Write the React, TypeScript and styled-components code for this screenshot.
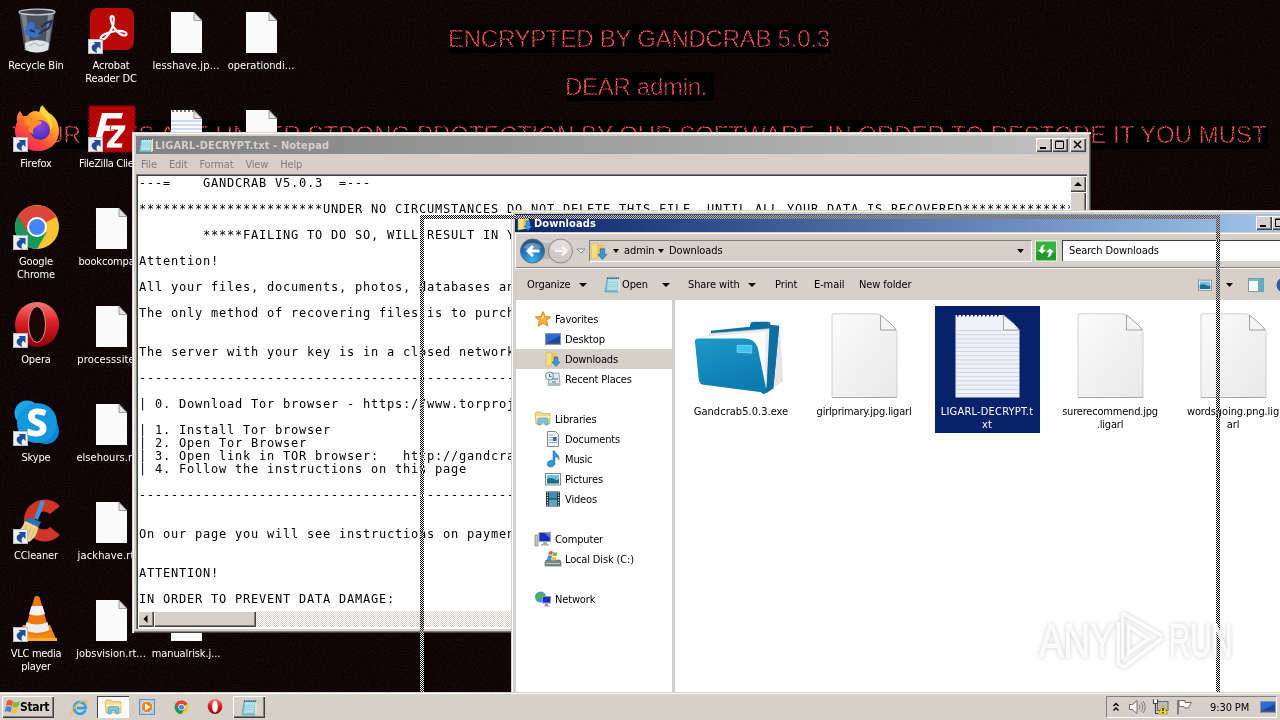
import React from "react";
import styled, { createGlobalStyle, css } from "styled-components";

const UI = `"DejaVu Sans Condensed", "DejaVu Sans", sans-serif`;
const FACE = "#d6d0c8";
const DITHER = "repeating-conic-gradient(#ffffff 0 25%, #d6d0c8 0 50%) 0 0 / 2px 2px";
const XOR = "repeating-conic-gradient(#ffffff 0 25%, #000000 0 50%) 0 0 / 2px 2px";

const Global = createGlobalStyle`
  * { box-sizing: border-box; }
  body { margin: 0; background: #110606; overflow: hidden; }
  svg { display: block; flex: none; overflow: visible; }
`;

const raised = css`
  background: ${FACE};
  box-shadow: inset 1px 1px 0 #fff, inset -1px -1px 0 #404040, inset -2px -2px 0 #808080;
`;

const Desktop = styled.div`
  position: relative;
  width: 1280px;
  height: 720px;
  overflow: hidden;
  background: #110606;
  font: 11px/13px ${UI};
  letter-spacing: -0.1px;
  color: #000;
  cursor: default;
  white-space: nowrap;
`;

const Grain = styled.svg`
  position: absolute;
  inset: 0;
`;

/* ---------- wallpaper ---------- */
const Wallpaper = styled.div`
  position: absolute;
  inset: 0;
  display: flex;
  flex-direction: column;
  align-items: center;
  padding-top: 24px;
  gap: 19px;
`;
const Notice = styled.div<{ $w: number; $ls: number }>`
  width: ${(p) => p.$w}px;
  height: 29px;
  background: #000;
  color: #f4545a;
  font: 300 24px/29px "Liberation Sans", sans-serif;
  letter-spacing: ${(p) => p.$ls}px;
  span {
    display: block;
    margin-left: -1px;
    -webkit-text-stroke: 0.4px #000;
    filter: url(#speckle);
  }
`;

/* ---------- desktop icons ---------- */
const IconGrid = styled.div`
  position: absolute;
  inset: 8px auto auto 0;
  display: grid;
  grid-template-columns: repeat(4, 74px);
  grid-template-rows: repeat(7, 98px);
  column-gap: 1px;
`;
const Shortcut = styled.div<{ $c: number; $r: number }>`
  grid-column: ${(p) => p.$c};
  grid-row: ${(p) => p.$r};
  display: flex;
  flex-direction: column;
  align-items: center;
  color: #fff;
`;
const ShortcutLabel = styled.div<{ $ls?: number }>`
  margin: 3px 2px 0 0;
  text-align: center;
  white-space: pre;
  letter-spacing: ${(p) => p.$ls ?? -0.15}px;
`;

/* ---------- windows ---------- */
const Win = styled.div<{ $x: number; $y: number; $w: number; $h: number }>`
  position: absolute;
  left: ${(p) => p.$x}px;
  top: ${(p) => p.$y}px;
  width: ${(p) => p.$w}px;
  height: ${(p) => p.$h}px;
  padding: 4px;
  display: flex;
  flex-direction: column;
  background: ${FACE};
  box-shadow: inset 1px 1px 0 ${FACE}, inset 2px 2px 0 #fff, inset -1px -1px 0 #404040, inset -2px -2px 0 #808080;
`;
const Title = styled.div<{ $active?: boolean }>`
  height: 18px;
  flex: none;
  display: flex;
  align-items: center;
  padding: 0 1px 0 2px;
  gap: 1px;
  font-weight: 700;
  color: ${(p) => (p.$active ? "#fff" : "#d6d0c8")};
  background: ${(p) => (p.$active ? "linear-gradient(90deg,#0a246a,#a6caf0)" : "linear-gradient(90deg,#808080,#c0c0c0)")};
`;
const TitleText = styled.div<{ $ls?: number }>`
  flex: 1;
  letter-spacing: ${(p) => p.$ls ?? 0}px;
`;
const CapButton = styled.div<{ $gap?: boolean }>`
  ${raised}
  width: 16px;
  height: 14px;
  flex: none;
  margin-left: ${(p) => (p.$gap ? 1 : -1)}px;
`;
const Menu = styled.div`
  display: flex;
  align-items: center;
  height: 20px;
  flex: none;
  padding: 1px 0 0 5px;
  gap: 12px;
  color: #808080;
  letter-spacing: -0.15px;
`;
const Client = styled.div`
  flex: 1;
  display: grid;
  grid-template: 1fr 16px / 1fr 16px;
  padding: 2px 1px 2px 2px;
  background: #fff;
  overflow: hidden;
  box-shadow: inset 1px 1px 0 #808080, inset 2px 2px 0 #404040, inset -1px -1px 0 #fff;
`;
const Paper = styled.pre`
  margin: 0;
  padding: 1px 0 0 1px;
  overflow: hidden;
  min-width: 0;
  font: 12px/13px "DejaVu Sans Mono", monospace;
  letter-spacing: 0.776px;
`;
const VScroll = styled.div`
  background: ${DITHER};
  display: flex;
  flex-direction: column;
`;
const HScroll = styled.div`
  background: ${DITHER};
  display: flex;
`;
const ScrollPart = styled.div<{ $w: number; $h: number }>`
  ${raised}
  width: ${(p) => p.$w}px;
  height: ${(p) => p.$h}px;
  flex: none;
`;
const Corner = styled.div`
  background: ${FACE};
`;

/* ---------- explorer ---------- */
const NavBar = styled.div`
  height: 35px;
  flex: none;
  margin-top: 1px;
  padding: 0 0 0 4px;
  display: flex;
  align-items: center;
  overflow: hidden;
  border-top: 1px solid #fff;
  border-bottom: 1px solid #808080;
  border-left: 1px solid #fff;
`;
const Address = styled.div`
  width: 443px;
  height: 22px;
  flex: none;
  margin: 0 3px 0 4px;
  display: flex;
  align-items: center;
  border: 1px solid;
  border-color: #808080 #fff #fff #808080;
`;
const Crumb = styled.span<{ $w: number; $ls?: number }>`
  width: ${(p) => p.$w}px;
  flex: none;
  letter-spacing: ${(p) => p.$ls ?? -0.1}px;
`;
const Spacer = styled.div`
  flex: 1;
`;
const Search = styled.div`
  width: 240px;
  height: 21px;
  flex: none;
  margin-left: 5px;
  padding-left: 7px;
  line-height: 21px;
  background: #fff;
  box-shadow: inset 1px 1px 0 #404040;
`;
const Tools = styled.div`
  height: 32px;
  flex: none;
  display: flex;
  align-items: center;
  padding-left: 12px;
  border-top: 1px solid #fff;
`;
const Tool = styled.div<{ $w: number }>`
  width: ${(p) => p.$w}px;
  flex: none;
  display: flex;
  align-items: center;
  gap: 1px;
`;
const Body = styled.div`
  flex: 1;
  display: flex;
  background: #fff;
  overflow: hidden;
  margin-left: 1px;
`;
const Tree = styled.div`
  width: 156px;
  flex: none;
  padding-top: 9px;
  display: flex;
  flex-direction: column;
  gap: 20px;
`;
const TreeRow = styled.div<{ $child?: boolean; $on?: boolean }>`
  height: 20px;
  padding-left: ${(p) => (p.$child ? 29 : 19)}px;
  display: flex;
  align-items: center;
  gap: 4px;
  letter-spacing: -0.15px;
  background: ${(p) => (p.$on ? FACE : "transparent")};
`;
const Split = styled.div`
  width: 3px;
  flex: none;
  background: #d0ccc6;
`;
const Files = styled.div`
  padding: 6px 0 0 14px;
  display: flex;
  align-items: flex-start;
  gap: 18px;
`;
const File = styled.div<{ $on?: boolean }>`
  width: 105px;
  height: 127px;
  flex: none;
  padding: 7px 1px 0 0;
  display: flex;
  flex-direction: column;
  align-items: center;
  background: ${(p) => (p.$on ? "#08216b" : "transparent")};
  color: ${(p) => (p.$on ? "#fff" : "#000")};
`;
const FileLabel = styled.div<{ $ls?: number }>`
  margin-top: 5px;
  text-align: center;
  white-space: pre;
  letter-spacing: ${(p) => p.$ls ?? -0.1}px;
`;

/* ---------- drag outline ---------- */
const DragTop = styled.div`
  position: absolute;
  left: 424px;
  top: 215px;
  width: 792px;
  height: 4px;
  background: ${XOR};
  mix-blend-mode: difference;
`;
const DragSide = styled.div<{ $x: number }>`
  position: absolute;
  left: ${(p) => p.$x}px;
  top: 215px;
  width: 4px;
  height: 480px;
  background: ${XOR};
  mix-blend-mode: difference;
`;

/* ---------- watermark ---------- */
const Mark = styled.div`
  position: absolute;
  left: 1039px;
  top: 608px;
  height: 64px;
  display: flex;
  align-items: center;
  color: rgba(255, 255, 255, 0.85);
  font: 49px/64px "Liberation Sans Narrow", "Liberation Sans", sans-serif;
  -webkit-text-stroke: 1px rgba(255, 255, 255, 0.85);
  filter: drop-shadow(0 0 2px rgba(0, 0, 0, 0.22));
`;
const MarkWord = styled.span<{ $w: number; $sx: number }>`
  width: ${(p) => p.$w}px;
  transform: scaleX(${(p) => p.$sx});
  transform-origin: 0 50%;
`;

/* ---------- taskbar ---------- */
const Taskbar = styled.div`
  position: absolute;
  left: 0;
  right: 0;
  bottom: 0;
  height: 28px;
  padding: 4px 3px 2px 2px;
  display: flex;
  background: ${FACE};
  box-shadow: inset 0 1px 0 #d6d0c8, inset 0 2px 0 #fff;
`;
const Start = styled.div`
  ${raised}
  width: 52px;
  height: 22px;
  display: flex;
  align-items: center;
  padding-left: 2px;
  margin-right: 9px;
  font: 700 12px/22px ${UI};
  letter-spacing: -0.35px;
`;
const TaskButton = styled.div<{ $state?: "pressed" | "raised" }>`
  width: 32px;
  height: 22px;
  margin-right: 2px;
  display: flex;
  align-items: center;
  justify-content: center;
  ${(p) => p.$state === "raised" && raised}
  ${(p) =>
    p.$state === "pressed" &&
    css`
      background: #fbfaf8;
      box-shadow: inset 1px 1px 0 #404040, inset -1px -1px 0 #fff;
    `}
`;
const Tray = styled.div`
  width: 171px;
  height: 22px;
  display: flex;
  align-items: center;
  border: 1px solid;
  border-color: #808080 #fff #fff #808080;
  padding: 0 1px 0 6px;
`;
const TraySlot = styled.div<{ $w: number }>`
  width: ${(p) => p.$w}px;
  flex: none;
  letter-spacing: -0.1px;
`;

/* ---------- drawings ---------- */
const Svg = ({ s = 48, vb = 48, children }: { s?: number; vb?: number; children: React.ReactNode }) => (
  <svg width={s} height={s} viewBox={`0 0 ${vb} ${vb}`}>{children}</svg>
);
const Link = () => (
  <g>
    <rect x="0.5" y="31.5" width="14" height="14" fill="#f0efec" stroke="#b9bfc8" />
    <path d="M5.500 34h7v7l-2.300-2.300c-1.800 1.600-2.200 3.300-0.900 6-3.400-0.400-6-2.800-5.600-5.700 0.300-1.700 1.700-2.800 3.600-3z" fill="#1f4f9c" />
  </g>
);
const Caret = ({ open, size = 7 }: { open?: boolean; size?: number }) => (
  <svg width={size} height="4" viewBox="0 0 7 4" preserveAspectRatio="none">
    <path d="M0 0h7L3.500 4z" fill={open ? "#fff" : "#000"} stroke={open ? "#777" : "none"} strokeWidth="0.8" />
  </svg>
);
const DocArt = ({ notes }: { notes?: boolean }) => (
  <Svg>
    <path d="M8 4h23l8 9v32H8z" fill="#fafafa" />
    {notes && <path d="M8 15h31M8 19h31M8 23h31M8 27h31M8 31h31" stroke="#a9bcdc" />}
    {notes && <path d="M9 5h22" stroke="#777" strokeWidth="2" strokeDasharray="2 2" />}
    <path d="M31 4.500v8h8z" fill="#e4e4e4" stroke="#888" strokeWidth="0.8" />
  </Svg>
);
const Recycle = () => (
  <Svg>
    <path d="M6 3L11.500 42Q24 47 36 42L42 3z" fill="#4c535d" />
    <path d="M8 6l6 35h4L13 6z" fill="#8f969f" opacity="0.7" />
    <path d="M35 6l-3 36 3-1L40 6z" fill="#9aa1aa" opacity="0.7" />
    <path d="M13 18c4-6 8-5 9-1l-1 4c4-1 8 2 7 6l-6 3-9-3c-2-3-1-6 0-9z" fill="#3a70c4" />
    <path d="M17 22l5 2M28 19l5-4 6-2-3 7-6 3-4 3" stroke="#1c3460" strokeWidth="2" fill="none" />
    <path d="M12 35q12-6 24 0l-1 7Q24 47 12.500 42z" fill="#dfe2e6" />
    <path d="M16 38l5-3 6 3 5-2" stroke="#a9afb6" fill="none" />
    <ellipse cx="24" cy="4" rx="18" ry="2.800" fill="#3b4047" stroke="#c6cbd1" strokeWidth="1.300" />
  </Svg>
);
const Acrobat = () => (
  <Svg>
    <rect x="2" y="0" width="44" height="42" rx="8" fill="#b90b06" />
    <path d="M13 31c-2-3 6-7 15-8 8-1 12 2 10 4-3 2-10-3-13-9-3-6-3-10-1-10s3 5 0 12c-3 7-8 13-11 11z" fill="none" stroke="#fff" strokeWidth="2.200" />
    <Link />
  </Svg>
);
const Firefox = () => (
  <Svg>
    <defs>
      <linearGradient id="fx" x1="0.9" y1="0" x2="0.2" y2="1">
        <stop offset="0" stopColor="#fff04a" /><stop offset="0.35" stopColor="#ffa726" /><stop offset="0.7" stopColor="#ff4a3a" /><stop offset="1" stopColor="#e2206a" />
      </linearGradient>
      <radialGradient id="fp" cx="0.5" cy="0.3" r="0.7"><stop offset="0" stopColor="#8a45e8" /><stop offset="1" stopColor="#4a2bb8" /></radialGradient>
    </defs>
    <path d="M4 16C3 11 5 7 7 5l3 5 4 0C18 5 22 4 26 6l3-7c3 3 5 6 7 8 6 3 10 10 10 18C46 37 37 45 25 45S2 37 2 25c0-4 1-7 2-9z" fill="url(#fx)" />
    <circle cx="27" cy="24" r="10" fill="url(#fp)" />
    <path d="M11 14c4-3 8-2 11 0 4 0 7 1 7 3-2 2-5 2-6 4-3 1-4 4-2 7-5-1-6-5-5-8-2-1-5-2-5-6z" fill="#ff8a2a" />
    <path d="M28 0c-2 4 0 7 3 10 4 4 7 8 6 15 4-6 2-13-1-17-3-3-6-4-8-8z" fill="#ffd93b" />
    <Link />
  </Svg>
);
const FileZilla = () => (
  <Svg>
    <rect x="1" y="0" width="46" height="46" fill="#b40206" stroke="#7a0003" strokeWidth="2" strokeDasharray="2 2" />
    <path d="M14 7h21l-1.500 5.500H19l-1.500 7h10L26 25H16l-4 13H6z" fill="#fff" />
    <path d="M23 19h15l-1 5-10.500 13H35l-1 5H18l1-5 11-13h-8z" fill="#fff" stroke="#b40206" strokeWidth="0.8" />
    <Link />
  </Svg>
);
const ChromeShape = () => (
  <g>
    <circle cx="24" cy="23" r="22" fill="#fbc432" />
    <path d="M24 23L5 12A22 22 0 0 0 24 45l9.500-16.500z" fill="#15995a" />
    <path d="M24 23L4.900 12A22 22 0 0 1 43.100 13H24z" fill="#de453a" />
    <path d="M24 13h19.100L24 23 14 28 4.900 12z" fill="#de453a" />
    <circle cx="24" cy="23" r="10" fill="#fff" />
    <circle cx="24" cy="23" r="8" fill="#4586f4" />
  </g>
);
const OperaShape = ({ hole }: { hole: string }) => (
  <g>
    <defs><linearGradient id="op" x1="0" y1="0" x2="0" y2="1"><stop offset="0" stopColor="#f47a78" /><stop offset="0.45" stopColor="#dd1f26" /><stop offset="1" stopColor="#8d0009" /></linearGradient></defs>
    <ellipse cx="24" cy="22.500" rx="22" ry="22.500" fill="url(#op)" />
    <ellipse cx="24" cy="22.500" rx="8.500" ry="18" fill={hole} stroke="#ef8d8a" strokeWidth="1" />
  </g>
);
const SText = styled.text`
  font: 700 38px "Open Sans", sans-serif;
  letter-spacing: 0;
`;
const Skype = () => (
  <Svg>
    <circle cx="14" cy="13" r="12.500" fill="#1aa7e8" />
    <circle cx="33" cy="31" r="13" fill="#0d84d6" />
    <circle cx="24" cy="23" r="20" fill="#1597e0" />
    <SText x="24" y="36" textAnchor="middle" fill="#fff" stroke="#fff" strokeWidth="1">S</SText>
    <Link />
  </Svg>
);
const CCleaner = () => (
  <Svg>
    <path d="M47 8A21 21 0 1 0 47 37L37 29a9 9 0 1 1 0-13z" fill="#cf3527" />
    <path d="M28 2l4 2-7 18-4-2z" fill="#3f93d8" />
    <path d="M16 19l12 5-3 6-13-6z" fill="#2573ba" />
    <path d="M12 23l13 6c0 6-3 11-9 15L2 34c6-2 8-6 10-11z" fill="#f2d48f" />
    <path d="M14 27l-5 10M18 29l-4 12M22 30l-5 12" stroke="#d9b266" />
    <Link />
  </Svg>
);
const Vlc = () => (
  <Svg>
    <path d="M10 29h27l7 16H3z" fill="#f08a12" />
    <path d="M3 42h41v3H3z" fill="#ffa92f" />
    <path d="M21.500 1q2.500-2 5 0l10 35q-12.500 7-25 0z" fill="#ef7a10" />
    <path d="M18.500 10h11l2.500 8q-8 3-16 0z" fill="#f4f4f4" />
    <path d="M13.500 26q10.500 5 21 0l2 8q-12.500 6-25 0z" fill="#ededed" />
    <Link />
  </Svg>
);
const NotepadIcon = ({ s = 16 }: { s?: number }) => (
  <Svg s={s} vb={16}>
    <path d="M3 2l12 0-1 13H1z" fill="#7cc3d4" stroke="#5f8f9c" strokeWidth="0.6" />
    <path d="M4 3h9l-1 10H3z" fill="#b4e6ee" />
    <path d="M13.500 2h1.500v12l-2 1z" fill="#eee6c8" />
    <path d="M3 2h11" stroke="#3b5560" strokeWidth="1.500" strokeDasharray="1 1" />
    <path d="M4 6h8M4 8h8M4 10h7" stroke="#86c5d6" strokeWidth="0.7" />
  </Svg>
);
const DownIcon = ({ s = 16 }: { s?: number }) => (
  <Svg s={s} vb={16}>
    <path d="M1 2l6-1v13l-6 1z" fill="#f5df85" stroke="#c9a94e" strokeWidth="0.5" />
    <path d="M6 2h6v12H6z" fill="#e9c75b" />
    <path d="M9 6h4v5h2l-4 4.500L7 11h2z" fill="#3c96dd" stroke="#1d64a8" strokeWidth="0.6" />
  </Svg>
);
const LibIcon = ({ s = 16 }: { s?: number }) => (
  <Svg s={s} vb={16}>
    <path d="M0 3l1-2h5l1 1.500h8V13H1z" fill="#f1dc86" stroke="#c3a54c" strokeWidth="0.6" />
    <path d="M1 6h14" stroke="#fff6c9" strokeWidth="1.500" />
    <path d="M3 9q0-2 2-2h6q2 0 2 2v5h-3v-3H6v3H3z" fill="#7fc4e6" stroke="#4a93bd" strokeWidth="0.6" />
  </Svg>
);
const Star = () => (
  <Svg s={16} vb={16}><path d="M8 0.500l2.300 5 5.400 0.500-4.100 3.600 1.300 5.600L8 12.300 3.100 15.200l1.300-5.600L0.300 6l5.400-0.500z" fill="#f9ad2c" stroke="#d2761a" strokeWidth="0.8" /><path d="M8 3l1.400 3.500L6 9z" fill="#ffe58a" /></Svg>
);
const Screen = ({ s = 16 }: { s?: number }) => (
  <Svg s={s} vb={16}><rect x="0.500" y="2.500" width="15" height="11" fill="#2f6ad0" stroke="#8b97ad" /><path d="M1 12l14-7v7z" fill="#1a45a4" /><rect x="1" y="11.500" width="14" height="1.500" fill="#4a586e" /></Svg>
);
const Recent = () => (
  <Svg s={16} vb={16}><path d="M5 2h9l1 12H3z" fill="#dfe9ef" stroke="#7d919d" strokeWidth="0.8" /><circle cx="4.500" cy="5" r="4" fill="#d7eaf5" stroke="#7a93a3" /><path d="M4.500 3v2.500h2M7 8h6M7 11h4" stroke="#56707f" fill="none" /><path d="M3 12h11v3H3z" fill="#aebcc5" /></Svg>
);
const Docs = () => (
  <Svg s={16} vb={16}><path d="M2.500 0.500h8l3 3v12h-11z" fill="#f7fafd" stroke="#7c8894" /><path d="M4 4h4M4 6.500h8M4 9h8M4 11.500h8" stroke="#93a4b8" /><rect x="8" y="6" width="3.500" height="4" fill="#3b68a3" /></Svg>
);
const Music = () => (
  <Svg s={16} vb={16}><path d="M8 0h2c0 3 5 3 4 9-1-3-2-3-4-3v6a4 3.300 -20 1 1-2-2.500z" fill="#2f98e0" stroke="#1766ab" strokeWidth="0.5" /></Svg>
);
const Pics = ({ s = 16 }: { s?: number }) => (
  <Svg s={s} vb={16}><rect x="0.500" y="2.500" width="15" height="11.500" fill="#fff" stroke="#7b8791" /><rect x="2" y="4" width="12" height="8.500" fill="#6fc0e6" /><path d="M2 8q4-2 7 0t5 0v4.500H2z" fill="#1e6f86" /></Svg>
);
const Vids = () => (
  <Svg s={16} vb={16}><rect x="1" y="0.500" width="14" height="15" fill="#22303a" /><path d="M2.500 1v14M13.500 1v14" stroke="#dde6ea" strokeWidth="1.300" strokeDasharray="1.300 1.200" /><rect x="4" y="1" width="8" height="6.500" fill="#3f8fb8" /><rect x="4" y="8.500" width="8" height="6.500" fill="#56a6cf" /></Svg>
);
const Comp = () => (
  <Svg s={16} vb={16}><path d="M0 4h3v11H0z" fill="#c8c8c0" stroke="#77776f" strokeWidth="0.6" /><rect x="4" y="1.500" width="11.500" height="9" fill="#1631b4" stroke="#9aa4bc" /><path d="M9 2h6v5z" fill="#5a7ae6" /><path d="M8 11h4v2h2v1.500H6V13h2z" fill="#a8aeb8" /></Svg>
);
const Disk = () => (
  <Svg s={16} vb={16}><path d="M1 9h14l1 2v4H0v-4z" fill="#7b888f" stroke="#566066" strokeWidth="0.6" /><path d="M1 12.500h14" stroke="#a5dca5" /><path d="M4 1q2-2 4 0l-1 3q-2-1.500-4 0z" fill="#e8542a" /><path d="M8.500 1q2 1.500 4 0l-1 3.500q-2 1-4 0z" fill="#6cb33a" /><path d="M3 5q2-1.500 4 0L6 9H2z" fill="#3e8de0" /><path d="M7.500 5.500q2 1 4 0L10.500 9.500h-4z" fill="#f4c22b" /></Svg>
);
const Net = () => (
  <Svg s={16} vb={16}><circle cx="5.500" cy="6" r="5.500" fill="#3b9fd8" /><path d="M2 2.500q4-2 5 1T4 8 1 8zM7 1l3 2-1 3z" fill="#52b24a" /><rect x="7.500" y="5.500" width="8" height="6.500" fill="#1a2fc0" stroke="#8f9bb8" /><path d="M10 12.500h3v2h1.500v1H9v-1h1z" fill="#8e98a8" /></Svg>
);
const Flag = () => (
  <Svg s={16} vb={16}>
    <path d="M3 2q3-2 6 0.500L8 7.500Q5 5.500 2 7z" fill="#ec5a2b" /><path d="M9.700 2.800q3 1.500 6-0.500l-1.200 5q-3 2-6 0.500z" fill="#79b93c" />
    <path d="M1.800 8q3-1.500 6 0.500L6.500 13.500Q3.500 11.500 0.500 13z" fill="#3d86dc" /><path d="M8.300 8.800q3 1.500 6-0.500l-1.200 5q-3 2-6 0.500z" fill="#f6c32c" />
  </Svg>
);
const IE = () => (
  <Svg s={17} vb={16}>
    <path d="M13.500 10.500A5.500 5.500 0 1 1 13.800 7.500V8.500H5.500" fill="none" stroke="#3aa0e2" strokeWidth="2.600" />
    <path d="M1 14.500C-1 12 5 3 13 1.500c3 0 2 2 1 4" fill="none" stroke="#efc13c" strokeWidth="1.300" />
  </Svg>
);
const Wmp = () => (
  <Svg s={16} vb={16}><rect x="0.500" y="0.500" width="15" height="15" fill="#a9cdee" stroke="#5f94c8" /><circle cx="8" cy="8" r="5.800" fill="#f08418" stroke="#fff" strokeWidth="0.6" /><path d="M6 4.500v7L11.500 8z" fill="#fff" /></Svg>
);
const Speaker = () => (
  <Svg s={16} vb={16}>
    <path d="M0.500 5.500h3L8 1.500v13L3.500 10.500h-3z" fill="#fff" stroke="#6b6b6b" />
    <path d="M10 5.500q2 2.500 0 5M12 3.500q3.500 4.500 0 9M14 2q4.500 6 0 12" fill="none" stroke="#7a7a7a" />
  </Svg>
);
const Wired = () => (
  <Svg s={16} vb={16}>
    <rect x="4.500" y="2.500" width="10.500" height="9" fill="#bcbcbc" stroke="#6a6a6a" />
    <path d="M0.500 0.500v4h4v-4M2.500 4.500V14.500h3" fill="none" stroke="#444" strokeWidth="1.200" />
    <path d="M1 1h3v3H1z" fill="#fff" />
    <path d="M10 6.500L15 15H5z" fill="#ffd42a" stroke="#a88400" strokeWidth="0.6" />
    <path d="M10 9v3M10 13v1.200" stroke="#000" strokeWidth="1.200" />
  </Svg>
);
const ActionFlag = () => (
  <Svg s={16} vb={16}>
    <path d="M1 1v14.500" stroke="#666" strokeWidth="1.500" />
    <path d="M2 1.500h6v2h6.500l-2 3 -1 2.500-3.500 0-1-1.500H2z" fill="#fff" stroke="#6d6d6d" />
  </Svg>
);
const BigDoc = ({ notes }: { notes?: boolean }) => (
  <svg width="67" height="87" viewBox="0 0 67 87">
    <defs><linearGradient id="bd" x1="0" y1="0" x2="1" y2="1"><stop offset="0" stopColor="#fbfbfb" /><stop offset="1" stopColor="#e9e9e9" /></linearGradient></defs>
    <path d={notes ? "M1.500 2h47l17 15v67.500h-64z" : "M2.500 0.800H45q3 0 5 2L64 15q2 2 2 5v64.500H1V2.300q0-1.500 1.500-1.500z"} fill={notes ? "#eef2f8" : "url(#bd)"} stroke={notes ? "none" : "#cfcfcf"} />
    {notes && Array.from({ length: 16 }, (_, i) => <path key={i} d={`M2 ${17.500 + i * 4.200}h63`} stroke="#c9cfda" strokeWidth="0.9" />)}
    {notes && <path d="M3 2h44" stroke="#08216b" strokeWidth="3" strokeDasharray="1.500 2.500" />}
    <path d="M49.500 2v15H65Q63 13.500 59 10z" fill="#f4f4f4" stroke="#a4a4a4" />
    {!notes && <path d="M1 84.500h65" stroke="#a8a8a8" />}
  </svg>
);
const Folder = () => (
  <svg width="96" height="87" viewBox="0 0 96 87">
    <defs><linearGradient id="fo" x1="0" y1="0" x2="0.400" y2="1"><stop offset="0" stopColor="#2098c8" /><stop offset="1" stopColor="#0a7cb0" /></linearGradient></defs>
    <g transform="translate(-1 0) scale(0.98)">
      <path d="M76 80l14-60 3 50z" fill="#bbb" opacity="0.4" />
      <path d="M19 18l40-4 1-4q1-1 3-1l15 0q2 0 2 3l9 1-6 64-10 6-50-42z" fill="#0c6f9f" />
      <path d="M18 21l62-5-4 60-57-6z" fill="#eeeeee" stroke="#c8c8c8" strokeWidth="0.7" />
      <path d="M10 24l66-6-1 55-60-30z" fill="#fafafa" stroke="#ddd" strokeWidth="0.6" />
      <path d="M79 15l10-2-6 63-7 6z" fill="#0c6f9f" />
      <path d="M3 29q0-3 3-3l47 0q11 0 14 9l9 44q0 3-3 2L10 73q-2-1-3-4z" fill="url(#fo)" />
      <path d="M46 33l15 0 0 8-15-1z" fill="#45c3ee" stroke="#7cdcf8" strokeWidth="0.8" />
    </g>
  </svg>
);

const LINES = [
  "---=    GANDCRAB V5.0.3  =---",
  "",
  "*".repeat(23) + "UNDER NO CIRCUMSTANCES DO NOT DELETE THIS FILE, UNTIL ALL YOUR DATA IS RECOVERED" + "*".repeat(23),
  "",
  "        *****FAILING TO DO SO, WILL RESULT IN YOUR SYSTEM CORRUPTION*****",
  "",
  "Attention!",
  "",
  "All your files, documents, photos, databases and other important files",
  "",
  "The only method of recovering files is to purchase an unique private key.",
  "",
  "",
  "The server with your key is in a closed network TOR.",
  "",
  "-".repeat(116),
  "",
  "| 0. Download Tor browser - https://www.torproject.org/",
  "",
  "| 1. Install Tor browser",
  "| 2. Open Tor Browser",
  "| 3. Open link in TOR browser:   http://gandcrab",
  "| 4. Follow the instructions on this page",
  "",
  "-".repeat(116),
  "",
  "",
  "On our page you will see instructions on payment",
  "",
  "",
  "ATTENTION!",
  "",
  "IN ORDER TO PREVENT DATA DAMAGE:",
];

const SHORTCUTS: { c: number; r: number; art: React.ReactNode; label: string; ls?: number }[] = [
  { c: 1, r: 1, art: <Recycle />, label: "Recycle Bin" },
  { c: 1, r: 2, art: <Firefox />, label: "Firefox" },
  { c: 1, r: 3, art: <Svg><ChromeShape /><Link /></Svg>, label: "Google\nChrome" },
  { c: 1, r: 4, art: <Svg><OperaShape hole="#1c0505" /><Link /></Svg>, label: "Opera" },
  { c: 1, r: 5, art: <Skype />, label: "Skype" },
  { c: 1, r: 6, art: <CCleaner />, label: "CCleaner" },
  { c: 1, r: 7, art: <Vlc />, label: "VLC media\nplayer", ls: -0.3 },
  { c: 2, r: 1, art: <Acrobat />, label: "Acrobat\nReader DC" },
  { c: 2, r: 2, art: <FileZilla />, label: "FileZilla Client", ls: -0.35 },
  { c: 2, r: 3, art: <DocArt />, label: "bookcompa..." },
  { c: 2, r: 4, art: <DocArt />, label: "processsite...", ls: 0.15 },
  { c: 2, r: 5, art: <DocArt />, label: "elsehours.rt...", ls: 0.05 },
  { c: 2, r: 6, art: <DocArt />, label: "jackhave.rt...", ls: 0.15 },
  { c: 2, r: 7, art: <DocArt />, label: "jobsvision.rt...", ls: 0 },
  { c: 3, r: 1, art: <DocArt />, label: "lesshave.jp...", ls: 0.15 },
  { c: 3, r: 2, art: <DocArt notes />, label: "" },
  { c: 3, r: 7, art: <DocArt />, label: "manualrisk.j...", ls: -0.1 },
  { c: 4, r: 1, art: <DocArt />, label: "operationdi...", ls: 0.05 },
  { c: 4, r: 2, art: <DocArt />, label: "" },
];

const TREE: { icon: React.ReactNode; label: string; on?: boolean }[][] = [
  [{ icon: <Star />, label: "Favorites" }, { icon: <Screen />, label: "Desktop" }, { icon: <DownIcon />, label: "Downloads", on: true }, { icon: <Recent />, label: "Recent Places" }],
  [{ icon: <LibIcon />, label: "Libraries" }, { icon: <Docs />, label: "Documents" }, { icon: <Music />, label: "Music" }, { icon: <Pics />, label: "Pictures" }, { icon: <Vids />, label: "Videos" }],
  [{ icon: <Comp />, label: "Computer" }, { icon: <Disk />, label: "Local Disk (C:)" }],
  [{ icon: <Net />, label: "Network" }],
];

const Caps = () => (
  <>
    <CapButton><svg width="16" height="14"><path d="M4 10h6" stroke="#000" strokeWidth="2" /></svg></CapButton>
    <CapButton><svg width="16" height="14"><path d="M3.500 3h8v7.500h-8z M3 3.500h9" fill="none" stroke="#000" /></svg></CapButton>
    <CapButton $gap><svg width="16" height="14"><path d="M4 3l7 7M11 3l-7 7" stroke="#000" strokeWidth="1.500" /></svg></CapButton>
  </>
);

export default function App() {
  return (
    <Desktop>
      <Global />
      <Grain width="1280" height="720">
        <defs>
          <filter id="noise" x="0" y="0" width="100%" height="100%" colorInterpolationFilters="sRGB">
            <feTurbulence type="fractalNoise" baseFrequency="0.7" numOctaves="2" seed="4" />
            <feColorMatrix values="0.16 0 0 0 -0.015  0.07 0 0 0 -0.014  0.07 0 0 0 -0.01  0 0 0 0 1" />
          </filter>
          <filter id="speckle" x="0" y="0" width="100%" height="100%" colorInterpolationFilters="sRGB">
            <feTurbulence type="fractalNoise" baseFrequency="0.8" numOctaves="1" seed="9" result="n" />
            <feColorMatrix in="n" values="0 0 0 0 0  0 0 0 0 0  0 0 0 0 0  5 0 0 0 -1.500" result="m" />
            <feComposite in="SourceGraphic" in2="m" operator="in" />
          </filter>
        </defs>
        <rect width="1280" height="720" filter="url(#noise)" />
      </Grain>
      <Wallpaper>
        <Notice $w={382} $ls={-0.25}><span>ENCRYPTED BY GANDCRAB 5.0.3</span></Notice>
        <Notice $w={148} $ls={-0.3}><span>DEAR admin.</span></Notice>
        <Notice $w={1255} $ls={0}><span>YOUR FILES ARE UNDER STRONG PROTECTION BY OUR SOFTWARE. IN ORDER TO RESTORE IT YOU MUST</span></Notice>
      </Wallpaper>
      <IconGrid>
        {SHORTCUTS.map((s) => (
          <Shortcut key={`${s.c}-${s.r}`} $c={s.c} $r={s.r}>
            {s.art}
            <ShortcutLabel $ls={s.ls}>{s.label}</ShortcutLabel>
          </Shortcut>
        ))}
      </IconGrid>

      <Win $x={132} $y={132} $w={959} $h={501}>
        <Title>
          <NotepadIcon />
          <TitleText $ls={0.13}>LIGARL-DECRYPT.txt - Notepad</TitleText>
          <Caps />
        </Title>
        <Menu><span>File</span><span>Edit</span><span>Format</span><span>View</span><span>Help</span></Menu>
        <Client>
          <Paper>{LINES.join("\n")}</Paper>
          <VScroll>
            <ScrollPart $w={16} $h={16}><svg width="16" height="16"><path d="M4 10h8L8 6z" /></svg></ScrollPart>
            <ScrollPart $w={16} $h={200} />
          </VScroll>
          <HScroll>
            <ScrollPart $w={16} $h={16}><svg width="16" height="16"><path d="M9.500 4v8L5.500 8z" /></svg></ScrollPart>
            <ScrollPart $w={102} $h={16} />
          </HScroll>
          <Corner />
        </Client>
      </Win>

      <Win $x={511} $y={210} $w={800} $h={520}>
        <Title $active>
          <DownIcon />
          <TitleText $ls={0.1}>Downloads</TitleText>
          <Caps />
        </Title>
        <NavBar>
          <svg width="57" height="28" viewBox="0 0 57 28">
            <defs>
              <radialGradient id="bk" cx="0.5" cy="0.9" r="0.9"><stop offset="0" stopColor="#35b6ee" /><stop offset="0.6" stopColor="#1f6fb4" /><stop offset="1" stopColor="#2f4f7a" /></radialGradient>
            </defs>
            <path d="M13 3q14 6 28 0v22q-14-6-28 0z" fill="#bbb8b2" />
            <circle cx="12.500" cy="14" r="12" fill="url(#bk)" stroke="#5b6a7c" />
            <path d="M3.500 11a10 9 0 0 1 18 0q-9 4-18 0z" fill="#fff" opacity="0.3" />
            <path d="M19.500 14H8.500M13 9L8 14l5 5" fill="none" stroke="#fff" strokeWidth="3" />
            <circle cx="40.500" cy="14" r="12" fill="#cfccc7" stroke="#8d8b87" />
            <path d="M30.500 13a10 10 0 0 1 20 0z" fill="#e0deda" />
            <path d="M35 14h11M42 9.500l4.500 4.500-4.500 4.500" fill="none" stroke="#f5f4f2" strokeWidth="2.500" />
          </svg>
          <Caret open size={8} />
          <Address>
            <DownIcon s={18} />
            <Crumb $w={5} />
            <Crumb $w={11}><Caret size={6} /></Crumb>
            <Crumb $w={34}>admin</Crumb>
            <Crumb $w={11}><Caret size={6} /></Crumb>
            <Crumb $w={60}>Downloads</Crumb>
            <Spacer />
            <Caret />
            <Crumb $w={7} />
          </Address>
          <svg width="22" height="22" viewBox="0 0 22 22">
            <rect x="0.500" y="1" width="21" height="20" fill="#35b53a" stroke="#e6f3e2" />
            <path d="M1 12h20v8H1z" fill="#1f9a2c" />
            <path d="M9 4.500C6.500 5 5 7 5 9.500H2.500L7 14l4.500-4.500H8.500C8.500 8 8.500 6.500 10 5zM13 17.500c2.500-0.500 4-2.500 4-5h2.500L15 8l-4.500 4.500h3c0 1.500 0 3-1.500 4.500z" fill="#fff" stroke="#1c8428" strokeWidth="0.4" />
          </svg>
          <Search>Search Downloads</Search>
        </NavBar>
        <Tools>
          <Tool $w={77}><Crumb $w={51}>Organize</Crumb><Caret size={8} /></Tool>
          <Tool $w={84}><NotepadIcon s={17} /><Crumb $w={39}>Open</Crumb><Caret size={8} /></Tool>
          <Tool $w={87}><Crumb $w={59}>Share with</Crumb><Caret size={8} /></Tool>
          <Tool $w={39}>Print</Tool>
          <Tool $w={45}>E-mail</Tool>
          <Tool $w={339}>New folder</Tool>
          <Tool $w={28}><Pics s={14} /></Tool>
          <Tool $w={22}><Caret /></Tool>
          <Tool $w={28}><Svg s={16} vb={16}><rect x="0.500" y="1.500" width="15" height="13" fill="#fff" stroke="#6d9fb0" /><path d="M1 3h9" stroke="#7fb5d6" strokeWidth="2" /><rect x="10" y="2" width="5" height="12" fill="#5fb0c4" /></Svg></Tool>
          <Tool $w={16}><Svg s={16} vb={16}><circle cx="8" cy="8" r="7.500" fill="#3556a8" /></Svg></Tool>
        </Tools>
        <Body>
          <Tree>
            {TREE.map((g, i) => (
              <div key={i}>
                {g.map((n, j) => (
                  <TreeRow key={n.label} $child={j > 0} $on={n.on}>{n.icon}<span>{n.label}</span></TreeRow>
                ))}
              </div>
            ))}
          </Tree>
          <Split />
          <Files>
            <File><Folder /><FileLabel $ls={0.03}>Gandcrab5.0.3.exe</FileLabel></File>
            <File><BigDoc /><FileLabel $ls={-0.2}>girlprimary.jpg.ligarl</FileLabel></File>
            <File $on><BigDoc notes /><FileLabel $ls={0.2}>{"LIGARL-DECRYPT.t\nxt"}</FileLabel></File>
            <File><BigDoc /><FileLabel $ls={-0.2}>{"surerecommend.jpg\n.ligarl"}</FileLabel></File>
            <File><BigDoc /><FileLabel>{"wordsgoing.png.lig\narl"}</FileLabel></File>
          </Files>
        </Body>
      </Win>

      <DragTop />
      <DragSide $x={420} />
      <DragSide $x={1216} />

      <Mark>
        <MarkWord $w={69} $sx={0.75}>ANY</MarkWord>
        <svg width="61" height="64" viewBox="0 0 60 64">
          <path d="M14 5v46M14 5L54 28M54 30L16 59l-6-3V14M20 18v27l20-14z" fill="none" stroke="rgba(255,255,255,0.9)" strokeWidth="3.500" />
        </svg>
        <MarkWord $w={66} $sx={0.6}>RUN</MarkWord>
      </Mark>

      <Taskbar>
        <Start><Flag />Start</Start>
        <TaskButton><IE /></TaskButton>
        <TaskButton $state="pressed"><LibIcon s={17} /></TaskButton>
        <TaskButton><Wmp /></TaskButton>
        <TaskButton><Svg s={15}><ChromeShape /></Svg></TaskButton>
        <TaskButton><Svg s={16}><OperaShape hole="#ffffff" /></Svg></TaskButton>
        <TaskButton $state="raised"><NotepadIcon s={17} /></TaskButton>
        <Spacer />
        <Tray>
          <TraySlot $w={16}><svg width="6" height="10" viewBox="0 0 6 10"><path d="M0.500 4L3 1.500 5.500 4M0.500 8.500L3 6l2.500 2.500" fill="none" stroke="#000" strokeWidth="1.400" /></svg></TraySlot>
          <TraySlot $w={24}><Speaker /></TraySlot>
          <TraySlot $w={24}><Wired /></TraySlot>
          <TraySlot $w={33}><ActionFlag /></TraySlot>
          <TraySlot $w={50}>9:30 PM</TraySlot>
          <Screen />
        </Tray>
      </Taskbar>
    </Desktop>
  );
}
